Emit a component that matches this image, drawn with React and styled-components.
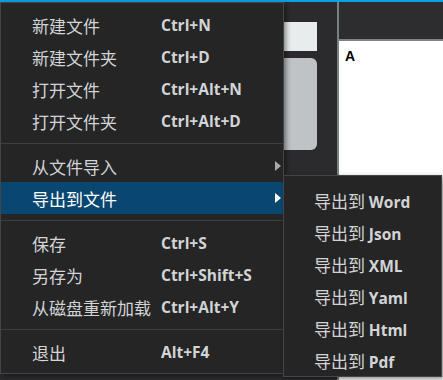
import styled, { createGlobalStyle } from "styled-components";

const GlobalStyle = createGlobalStyle`
  html, body {
    margin: 0;
    padding: 0;
    background: #2b2b2d;
  }
  body {
    width: 443px;
    height: 380px;
    overflow: hidden;
    font-family: "Noto Sans CJK SC", "Noto Sans", sans-serif;
  }
`;

const Frame = styled.div`
  position: relative;
  width: 443px;
  height: 380px;
  display: flex;
  flex-direction: column;
  background: #2b2b2d;
  overflow: hidden;
`;

const TopStrip = styled.div`
  flex: none;
  height: 2px;
  background: #0aa2e4;
`;

const Workspace = styled.div`
  flex: 1;
  display: flex;
`;

const SidePanel = styled.div`
  flex: none;
  width: 339px;
  box-sizing: border-box;
  display: flex;
  flex-direction: column;
  gap: 7px;
  padding: 20px 20px 0 8px;
  border-right: 2px solid #7b8181;
`;

const SearchField = styled.div`
  height: 29px;
  background: #e9ecec;
`;

const ListBox = styled.div`
  height: 92px;
  background: #bfc3c6;
  border-radius: 6px;
`;

const EditorPane = styled.div`
  flex: 1;
  display: flex;
  flex-direction: column;
`;

const EditorHeader = styled.div`
  height: 37px;
  background: #2d2d30;
  border-bottom: 2px solid #7f8585;
`;

const EditorBody = styled.div`
  flex: 1;
  background: #ffffff;
  padding: 7px 6px;
  font-family: "Liberation Sans", Arial, sans-serif;
  font-weight: 700;
  font-size: 14px;
  color: #000;
`;

const Menu = styled.div`
  position: absolute;
  left: 0;
  top: 2px;
  width: 284px;
  box-sizing: border-box;
  padding: 6px 0 5px;
  background: #252526;
  border: 1px solid #454547;
  box-shadow: 2px 2px 5px rgba(0, 0, 0, 0.45);
  z-index: 1;
`;

const SubMenu = styled(Menu)`
  left: 283px;
  top: 175px;
  width: 159px;
  padding: 8px 0 0;
  z-index: 2;
`;

const Row = styled.div`
  height: 32px;
  display: grid;
  grid-template-columns: ${(p) => (p.sub ? "1fr" : "129px 1fr 8px")};
  align-items: center;
  padding-left: ${(p) => (p.sub ? "30px" : "31px")};
  background: ${(p) => (p.active ? "#094771" : "transparent")};
  color: ${(p) => (p.active ? "#ffffff" : "#d2d4d6")};
  font-size: 17px;
  white-space: nowrap;
`;

const Label = styled.span`
  font-weight: 400;
`;

const Latin = styled.span`
  font-family: "Open Sans", "Noto Sans", sans-serif;
  font-weight: 700;
  font-size: 15.5px;
`;

const Shortcut = styled(Latin)``;

const Arrow = styled.span`
  width: 0;
  height: 0;
  border-top: 5px solid transparent;
  border-bottom: 5px solid transparent;
  border-left: 6px solid ${(p) => (p.active ? "#ffffff" : "#a8a8a8")};
`;

const Divider = styled.div`
  height: 1px;
  margin: 6px 0;
  background: #3e3e41;
`;

const groups = [
  [
    { label: "新建文件", key: "Ctrl+N" },
    { label: "新建文件夹", key: "Ctrl+D" },
    { label: "打开文件", key: "Ctrl+Alt+N" },
    { label: "打开文件夹", key: "Ctrl+Alt+D" },
  ],
  [
    { label: "从文件导入", more: true },
    { label: "导出到文件", more: true, active: true },
  ],
  [
    { label: "保存", key: "Ctrl+S" },
    { label: "另存为", key: "Ctrl+Shift+S" },
    { label: "从磁盘重新加载", key: "Ctrl+Alt+Y" },
  ],
  [{ label: "退出", key: "Alt+F4" }],
];

const exportTargets = ["Word", "Json", "XML", "Yaml", "Html", "Pdf"];

export default function App() {
  return (
    <>
      <GlobalStyle />
      <Frame>
        <TopStrip />
        <Workspace>
          <SidePanel>
            <SearchField />
            <ListBox />
          </SidePanel>
          <EditorPane>
            <EditorHeader />
            <EditorBody>A</EditorBody>
          </EditorPane>
        </Workspace>

        <Menu>
          {groups.map((items, gi) => (
            <div key={gi}>
              {gi > 0 && <Divider />}
              {items.map((it) => (
                <Row key={it.label} active={it.active}>
                  <Label>{it.label}</Label>
                  <Shortcut>{it.key || ""}</Shortcut>
                  {it.more ? <Arrow active={it.active} /> : <span />}
                </Row>
              ))}
            </div>
          ))}
        </Menu>

        <SubMenu>
          {exportTargets.map((t) => (
            <Row sub key={t}>
              <span>
                <Label>导出到 </Label>
                <Latin>{t}</Latin>
              </span>
            </Row>
          ))}
        </SubMenu>
      </Frame>
    </>
  );
}
